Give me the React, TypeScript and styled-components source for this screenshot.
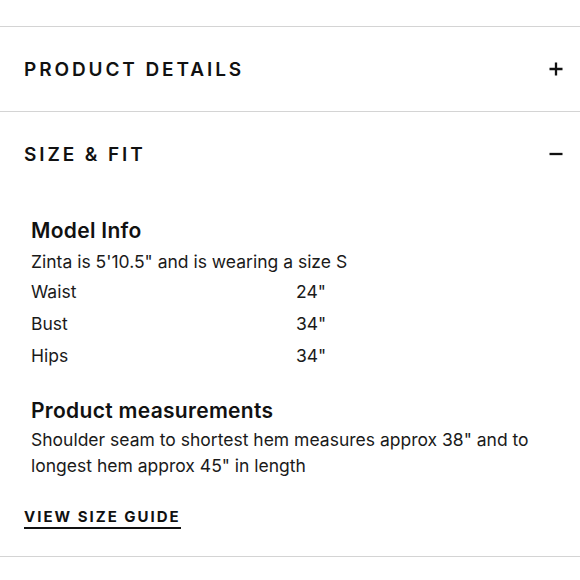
import React from 'react';
import styled, { createGlobalStyle } from 'styled-components';

const GlobalStyle = createGlobalStyle`
  html, body {
    margin: 0;
    padding: 0;
    background: #ffffff;
  }
  body {
    font-family: Inter, "Open Sans", Arial, sans-serif;
    color: #111111;
  }
`;

const Page = styled.div`
  width: 580px;
  padding-top: 26px;
`;

const Section = styled.section`
  border-top: 1.5px solid #d4d4d4;
`;

const BottomRule = styled.div`
  border-top: 1.5px solid #d4d4d4;
  margin-top: 27px;
`;

const Header = styled.div`
  height: 84px;
  display: flex;
  align-items: center;
  justify-content: space-between;
  padding: 0 17px 0 24px;
`;

const Title = styled.h2`
  margin: 0;
  font-size: 19px;
  font-weight: 600;
  letter-spacing: 2.9px;
  text-transform: uppercase;
  color: #111;
`;

const Toggle = styled.span`
  width: 14px;
  height: 14px;
  display: flex;
  align-items: center;
  justify-content: center;
`;

const Body = styled.div`
  padding: 21px 22px 0 24px;
`;

const Block = styled.div<{ $gap?: number }>`
  padding-left: 7px;
  margin-bottom: ${(p) => p.$gap ?? 0}px;
`;

const Heading = styled.h3<{ $space: number }>`
  margin: 0 0 ${(p) => p.$space}px 0;
  font-size: 21px;
  font-weight: 600;
  letter-spacing: 0.3px;
  line-height: 28px;
  color: #111;
`;

const Text = styled.p`
  margin: 0;
  font-size: 17.5px;
  line-height: 26px;
  color: #1a1a1a;
`;

const Rows = styled.div`
  margin-top: 1px;
`;

const Row = styled.div`
  display: grid;
  grid-template-columns: 265px auto;
  font-size: 17.5px;
  line-height: 32px;
  color: #1a1a1a;
`;

const GuideLink = styled.a`
  display: inline-block;
  margin-top: 28px;
  font-size: 15px;
  font-weight: 700;
  letter-spacing: 2px;
  line-height: 20px;
  color: #111;
  text-decoration: none;
  border-bottom: 2.6px solid #111;
`;

const Plus = () => (
  <svg width="14" height="14" viewBox="0 0 14 14">
    <path d="M7 0.5v13M0.5 7h13" stroke="#111" strokeWidth="2.3" />
  </svg>
);

const Minus = () => (
  <svg width="14" height="14" viewBox="0 0 14 14">
    <path d="M0.5 7h13" stroke="#111" strokeWidth="2.3" />
  </svg>
);

const measurements = [
  { label: 'Waist', value: '24"' },
  { label: 'Bust', value: '34"' },
  { label: 'Hips', value: '34"' },
];

export default function App() {
  return (
    <Page>
      <GlobalStyle />
      <Section>
        <Header>
          <Title>Product Details</Title>
          <Toggle>
            <Plus />
          </Toggle>
        </Header>
      </Section>
      <Section>
        <Header>
          <Title>Size &amp; Fit</Title>
          <Toggle>
            <Minus />
          </Toggle>
        </Header>
        <Body>
          <Block $gap={25}>
            <Heading $space={4}>Model Info</Heading>
            <Text>Zinta is 5'10.5" and is wearing a size S</Text>
            <Rows>
              {measurements.map((m) => (
                <Row key={m.label}>
                  <span>{m.label}</span>
                  <span>{m.value}</span>
                </Row>
              ))}
            </Rows>
          </Block>
          <Block>
            <Heading $space={2}>Product measurements</Heading>
            <Text>
              Shoulder seam to shortest hem measures approx 38" and to longest hem approx 45" in
              length
            </Text>
          </Block>
          <GuideLink href="#">VIEW SIZE GUIDE</GuideLink>
        </Body>
      </Section>
      <BottomRule />
    </Page>
  );
}
